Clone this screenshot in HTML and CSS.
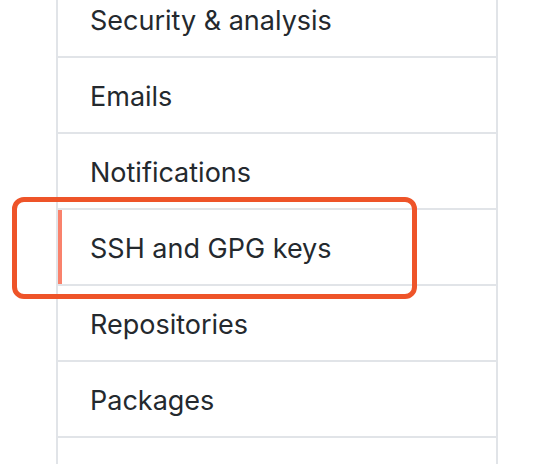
FILE: index.html
```html
<!DOCTYPE html>
<html>

<head>
  <title>Settings menu</title>
  <link rel="stylesheet" href="styles.css">
</head>

<body>
  <nav class="menu">
    <a class="menu-item" href="#">Security &amp; analysis</a>
    <a class="menu-item" href="#">Emails</a>
    <a class="menu-item" href="#">Notifications</a>
    <a class="menu-item selected" href="#">SSH and GPG keys</a>
    <a class="menu-item" href="#">Repositories</a>
    <a class="menu-item" href="#">Packages</a>
  </nav>

  <!-- annotation box drawn over the selected item -->
  <div class="highlight"></div>
</body>

</html>
```

FILE: styles.css
```css
/* Reset default margin and padding for body */
body {
  margin: 0;
  padding: 0;
  background-color: #fff;
  font-family: 'Inter', 'Liberation Sans', sans-serif;
  overflow: hidden;
  position: relative;
  height: 464px;
}

/* Side menu box */
.menu {
  display: flex;
  flex-direction: column;
  width: 438px;
  margin: -20px 0 0 56px;
  padding-bottom: 60px;
  border: 2px solid #e1e4e8;
}

/* Each menu row */
.menu-item {
  position: relative;
  display: block;
  padding: 18px 32px 14px;
  font-size: 27px;
  line-height: 42px;
  color: #24292e;
  text-decoration: none;
  border-bottom: 2px solid #e1e4e8;
}

/* Orange bar on the current item */
.menu-item.selected::before {
  content: "";
  position: absolute;
  top: 0;
  bottom: 0;
  left: 0;
  width: 4px;
  background-color: #f9826c;
}

/* Red annotation rectangle */
.highlight {
  position: absolute;
  left: 12px;
  top: 197px;
  width: 395px;
  height: 92px;
  border: 5px solid #ee5429;
  border-radius: 12px;
}
```
